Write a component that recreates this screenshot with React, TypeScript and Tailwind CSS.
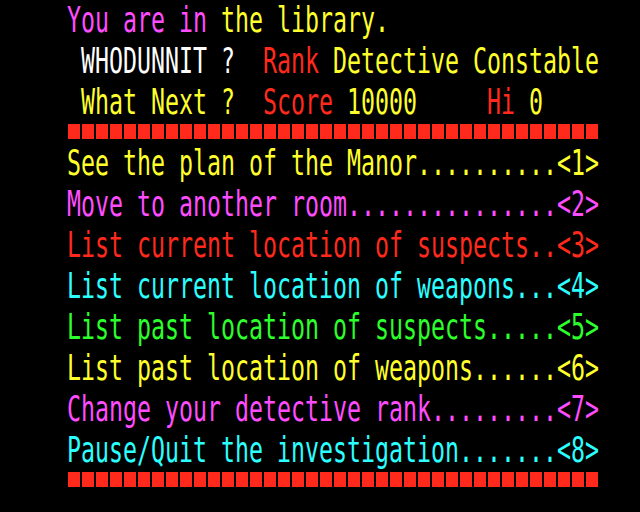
import React from "react";

type Seg = [string, string];

const R = "text-[#ff2a1c]";
const G = "text-[#2cff2c]";
const Y = "text-[#ffff2c]";
const M = "text-[#ff4cff]";
const CY = "text-[#2cffff]";
const W = "text-[#ffffff]";

const header: Seg[][] = [
  [
    ["You are in", M],
    [" ", W],
    ["the library.", Y],
  ],
  [
    [" WHODUNNIT ?", W],
    ["  ", W],
    ["Rank", R],
    [" ", W],
    ["Detective Constable", Y],
  ],
  [
    [" What Next ?", Y],
    ["  ", W],
    ["Score", R],
    [" ", W],
    ["10000", Y],
    ["     ", W],
    ["Hi", R],
    [" ", W],
    ["0", Y],
  ],
];

const menu: Seg[] = [
  ["See the plan of the Manor..........<1>", Y],
  ["Move to another room...............<2>", M],
  ["List current location of suspects..<3>", R],
  ["List current location of weapons...<4>", CY],
  ["List past location of suspects.....<5>", G],
  ["List past location of weapons......<6>", Y],
  ["Change your detective rank.........<7>", M],
  ["Pause/Quit the investigation.......<8>", CY],
];

function Line({ segs }: { segs: Seg[] }) {
  return (
    <div className="h-[40.96px] leading-[40.96px] whitespace-pre scale-y-150 text-[23.25px]">
      {segs.map((s, i) => (
        <span key={i} className={s[1]}>
          {s[0]}
        </span>
      ))}
    </div>
  );
}

function Bar() {
  return (
    <div className="h-[20.48px] pt-[1.5px] pl-[1px] flex gap-[2px]">
      {Array.from({ length: 38 }).map((_, i) => (
        <div key={i} className="w-[12px] h-[15px] bg-[#ff2a1c]" />
      ))}
    </div>
  );
}

export default function App() {
  return (
    <div className="w-[640px] h-[512px] bg-black overflow-hidden pl-[67px] font-['DejaVu_Sans_Mono',monospace]">
      {header.map((segs, i) => (
        <Line key={i} segs={segs} />
      ))}
      <Bar />
      {menu.map((m, i) => (
        <Line key={i} segs={[m]} />
      ))}
      <Bar />
    </div>
  );
}
